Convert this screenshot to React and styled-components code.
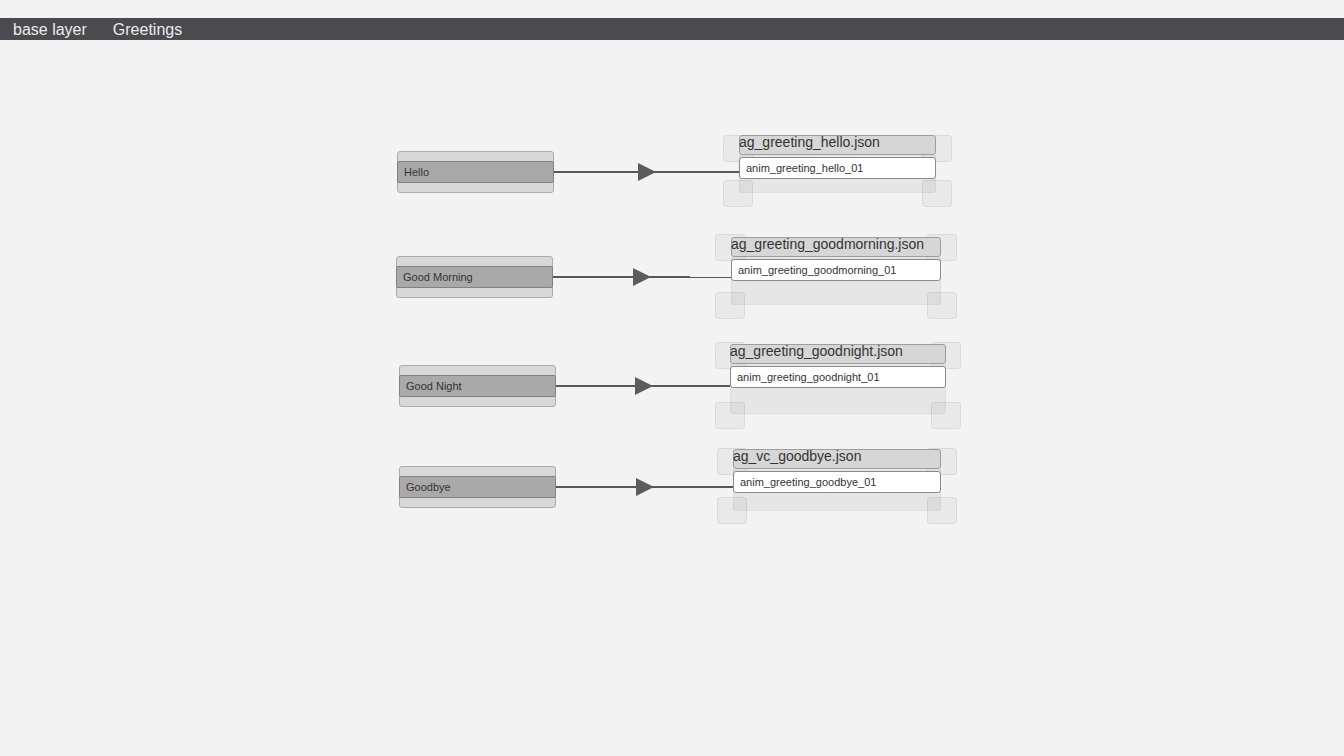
import React from "react";
import styled, { createGlobalStyle } from "styled-components";

const TOP = 40;

const GlobalStyle = createGlobalStyle`
  html, body {
    margin: 0;
    padding: 0;
    background: #f3f3f3;
    font-family: "Liberation Sans", Arial, sans-serif;
  }
`;

const Page = styled.div`
  display: flex;
  flex-direction: column;
  height: 756px;
  padding-top: 18px;
  box-sizing: border-box;
  background: #f3f3f3;
  overflow: hidden;
`;

const Breadcrumb = styled.div`
  display: flex;
  align-items: center;
  gap: 26px;
  height: 22px;
  padding-left: 13px;
  background: #4b4a4f;
  color: #ececec;
  font-size: 16px;
`;

const Crumb = styled.span`
  line-height: 22px;
  padding-top: 1px;
`;

const Canvas = styled.div`
  position: relative;
  flex: 1;
`;

const EdgeLayer = styled.svg`
  position: absolute;
  left: 0;
  top: 0;
  width: 100%;
  height: 100%;
  pointer-events: none;
`;

const StateNode = styled.div`
  position: absolute;
  left: ${(p) => p.x}px;
  top: ${(p) => p.y - TOP}px;
  width: ${(p) => p.w}px;
  height: 42px;
  box-sizing: border-box;
  display: flex;
  flex-direction: column;
  background: #d8d8d8;
  border: 1px solid #ababab;
  border-radius: 3px;
`;

const StateBand = styled.div`
  margin: 9px -1px 0;
  height: 22px;
  box-sizing: border-box;
  display: flex;
  align-items: center;
  padding-left: 6px;
  background: #a9a9a9;
  border: 1px solid #818181;
  border-radius: 2px;
  color: #333;
  font-size: 11px;
`;

const Handle = styled.div`
  position: absolute;
  left: ${(p) => p.x}px;
  top: ${(p) => p.y - TOP}px;
  width: 30px;
  height: 27px;
  box-sizing: border-box;
  background: rgba(0, 0, 0, 0.04);
  border: 1px solid rgba(0, 0, 0, 0.07);
  border-radius: 4px;
`;

const ClipNode = styled.div`
  position: absolute;
  left: ${(p) => p.x}px;
  top: ${(p) => p.y - TOP}px;
  width: ${(p) => p.w}px;
  display: flex;
  flex-direction: column;
`;

const ClipTitle = styled.div`
  height: 20px;
  box-sizing: border-box;
  background: #d6d6d6;
  border: 1px solid #9d9d9d;
  border-radius: 3px;
  color: #333;
  font-size: 14px;
  line-height: 13px;
  text-indent: -1px;
  white-space: nowrap;
`;

const ClipBody = styled.div`
  height: ${(p) => p.h}px;
  box-sizing: border-box;
  padding-top: 2px;
  background: rgba(0, 0, 0, 0.05);
  border: 1px solid rgba(0, 0, 0, 0.04);
  border-top: none;
  border-radius: 0 0 3px 3px;
`;

const ClipField = styled.div`
  height: 22px;
  margin: 0 -1px;
  box-sizing: border-box;
  display: flex;
  align-items: center;
  padding-left: 6px;
  background: #ffffff;
  border: 1px solid #8a8a8a;
  border-radius: 3px;
  color: #333;
  font-size: 11px;
  white-space: nowrap;
`;

const rows = [
  {
    label: "Hello",
    left: { x: 397, y: 151 },
    lineY: 172,
    arrowX: 638,
    thickTo: 739,
    clip: { x: 739, y: 135, w: 197, bottom: 193 },
    file: "ag_greeting_hello.json",
    anim: "anim_greeting_hello_01",
    handles: [[723, 135], [922, 135], [723, 180], [922, 180]],
  },
  {
    label: "Good Morning",
    left: { x: 396, y: 256 },
    lineY: 277,
    arrowX: 633,
    thickTo: 690,
    clip: { x: 731, y: 237, w: 210, bottom: 305 },
    file: "ag_greeting_goodmorning.json",
    anim: "anim_greeting_goodmorning_01",
    handles: [[715, 234], [927, 234], [715, 292], [927, 292]],
  },
  {
    label: "Good Night",
    left: { x: 399, y: 365 },
    lineY: 386,
    arrowX: 635,
    thickTo: 730,
    clip: { x: 730, y: 344, w: 216, bottom: 414 },
    file: "ag_greeting_goodnight.json",
    anim: "anim_greeting_goodnight_01",
    handles: [[715, 342], [931, 342], [715, 402], [931, 402]],
  },
  {
    label: "Goodbye",
    left: { x: 399, y: 466 },
    lineY: 487,
    arrowX: 636,
    thickTo: 733,
    clip: { x: 733, y: 449, w: 208, bottom: 511 },
    file: "ag_vc_goodbye.json",
    anim: "anim_greeting_goodbye_01",
    handles: [[717, 448], [927, 448], [717, 497], [927, 497]],
  },
];

const NODE_W = 157;

export default function App() {
  return (
    <>
      <GlobalStyle />
      <Page>
        <Breadcrumb>
          <Crumb>base layer</Crumb>
          <Crumb>Greetings</Crumb>
        </Breadcrumb>
        <Canvas>
          {rows.map((r) =>
            r.handles.map(([hx, hy], i) => (
              <Handle key={r.label + i} x={hx} y={hy} />
            ))
          )}

          <EdgeLayer>
            {rows.map((r) => {
              const y = r.lineY - TOP;
              const x0 = r.left.x + NODE_W;
              return (
                <g key={r.label}>
                  <line x1={x0} y1={y} x2={r.thickTo} y2={y} stroke="#585858" strokeWidth="2" />
                  {r.thickTo < r.clip.x && (
                    <line x1={r.thickTo} y1={y + 0.5} x2={r.clip.x} y2={y + 0.5} stroke="#585858" strokeWidth="1" />
                  )}
                  <polygon
                    points={`${r.arrowX},${y - 9} ${r.arrowX + 18},${y} ${r.arrowX},${y + 9}`}
                    fill="#5c5c5c"
                  />
                </g>
              );
            })}
          </EdgeLayer>

          {rows.map((r) => (
            <StateNode key={r.label} x={r.left.x} y={r.left.y} w={NODE_W}>
              <StateBand>{r.label}</StateBand>
            </StateNode>
          ))}

          {rows.map((r) => (
            <ClipNode key={r.file} x={r.clip.x} y={r.clip.y} w={r.clip.w}>
              <ClipTitle>{r.file}</ClipTitle>
              <ClipBody h={r.clip.bottom - r.clip.y - 20}>
                <ClipField>{r.anim}</ClipField>
              </ClipBody>
            </ClipNode>
          ))}
        </Canvas>
      </Page>
    </>
  );
}
